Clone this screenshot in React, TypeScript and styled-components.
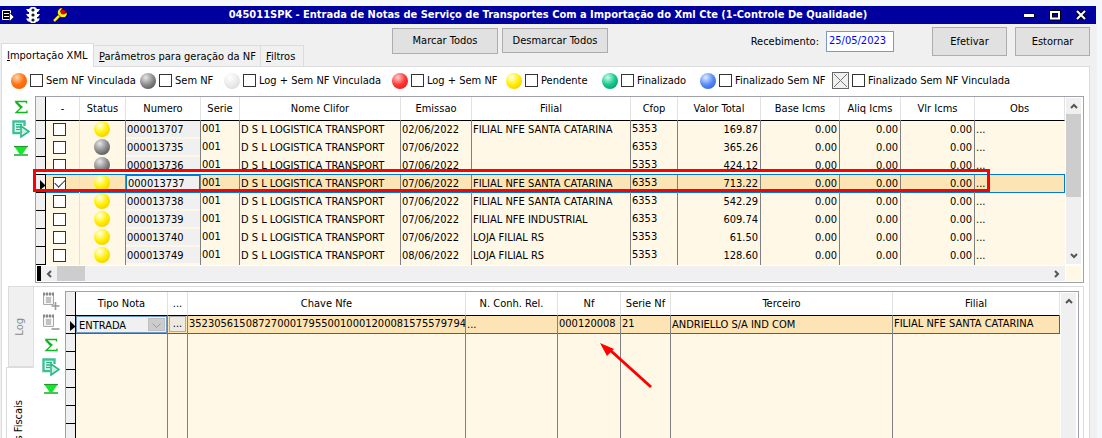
import React from "react";
import styled, { createGlobalStyle, css } from "styled-components";

const GlobalStyle = createGlobalStyle`
  * { box-sizing: border-box; }
  body {
    margin: 0;
    overflow: hidden;
    background: #f4f8fd;
    color: #000;
    font: 11px/14px "DejaVu Sans Condensed", "Noto Sans", sans-serif;
  }
  button, input, select { font: inherit; color: inherit; margin: 0; }
  svg { display: block; }
`;

/* ---------- window frame ---------- */

const Screen = styled.div`
  height: 100vh;
  display: flex;
  flex-direction: column;
  padding: 6px 5px 0 0;
  overflow: hidden;
`;

const TitleBar = styled.header`
  flex: none;
  display: flex;
  align-items: center;
  height: 18px;
  margin-right: 1px;
  background: #00009f;
  color: #fff;
`;

const TitleSide = styled.div<{ $end?: boolean }>`
  flex: none;
  width: 76px;
  display: flex;
  align-items: center;
  justify-content: ${(p) => (p.$end ? "flex-end" : "flex-start")};
  gap: ${(p) => (p.$end ? 12 : 10)}px;
  padding: 0 ${(p) => (p.$end ? 8 : 0)}px 0 ${(p) => (p.$end ? 0 : 1)}px;
`;

const TitleText = styled.h1`
  flex: 1;
  margin: 0;
  text-align: center;
  font-size: 11px;
  line-height: 18px;
  font-weight: bold;
  white-space: nowrap;
`;

const CaptionButton = styled.button`
  width: 14px;
  height: 14px;
  padding: 0;
  border: 0;
  background: none;
`;

const Body = styled.div`
  flex: 1;
  min-height: 0;
  display: flex;
  flex-direction: column;
  padding: 0 7px 0 1px;
  background: #f0f0f0;
`;

const TopBar = styled.div`
  flex: none;
  display: flex;
  height: 42px;
`;

const Tabs = styled.div`
  display: flex;
  align-items: flex-end;
  flex: 0 0 391px;
`;

const Tab = styled.button<{ $active?: boolean; $width: number }>`
  width: ${(p) => p.$width}px;
  height: 21px;
  padding: 2px 5px 0;
  text-align: left;
  white-space: nowrap;
  background: #f0f0f0;
  border: 1px solid #dcdcdc;
  border-width: 1px 1px 0 0;
  ${(p) =>
    p.$active &&
    css`
      height: 24px;
      margin-bottom: -1px;
      padding-top: 0;
      border-left-width: 1px;
      background: #fff;
      position: relative;
    `}
`;

const Actions = styled.div<{ $end?: boolean }>`
  display: flex;
  align-items: flex-start;
  gap: ${(p) => (p.$end ? 8 : 4)}px;
  padding-top: ${(p) => (p.$end ? 3 : 4)}px;
  margin-left: ${(p) => (p.$end ? "auto" : "0")};
`;

const PushButton = styled.button<{ $w: number; $h: number }>`
  width: ${(p) => p.$w}px;
  height: ${(p) => p.$h}px;
  padding: 0;
  background: #e1e1e1;
  border: 1px solid #adadad;
`;

const DateField = styled.label`
  display: flex;
  align-items: center;
  gap: 7px;
  padding: 4px 30px 0 0;
`;

const DateInput = styled.input`
  width: 68px;
  height: 21px;
  padding: 0 2px 3px;
  border: 1px solid #7a9cc0;
  background: #fff;
  color: #00f;
`;

const Panel = styled.main`
  flex: 1;
  min-height: 0;
  border: 1px solid #dcdcdc;
  border-bottom: 0;
  background: #fff;
`;

/* ---------- legend ---------- */

const Legend = styled.div`
  display: grid;
  grid-template-columns: 129px 84px 168px 114px 96px 98px 132px 1fr;
  align-items: center;
  height: 29px;
  padding: 0 0 2px 9px;
`;

const LegendItem = styled.label`
  display: flex;
  align-items: center;
  gap: 3px;
  white-space: nowrap;
`;

const ballColors = {
  orange: ["#ffd9b0", "#ff7010", "#f25a00"],
  gray: ["#e6e6e6", "#8c8c8c", "#3c3c3c"],
  light: ["#ffffff", "#ececec", "#d4d4d4"],
  red: ["#ffd0d0", "#ff3838", "#e01010"],
  yellow: ["#fffff0", "#fff000", "#f2b800"],
  green: ["#c8ffe8", "#18c890", "#008c58"],
  blue: ["#dcecff", "#5a8cf8", "#2050d8"],
};
type BallColor = keyof typeof ballColors;

const Ball = styled.span<{ $color: BallColor }>`
  display: block;
  flex: none;
  width: 16px;
  height: 16px;
  border-radius: 50%;
  background: radial-gradient(
    circle at 36% 28%,
    ${(p) => ballColors[p.$color][0]} 0,
    ${(p) => ballColors[p.$color][1]} 48%,
    ${(p) => ballColors[p.$color][2]} 100%
  );
`;

const Check = styled.input.attrs({ type: "checkbox" })`
  appearance: none;
  display: block;
  flex: none;
  position: relative;
  width: 13px;
  height: 13px;
  border: 1px solid #333;
  background: #fff;
  &:checked::after {
    content: "";
    position: absolute;
    left: 1px;
    top: 1px;
    width: 9px;
    height: 5px;
    border: solid #333;
    border-width: 0 0 1px 1px;
    transform: rotate(-45deg);
  }
`;

/* ---------- grids ---------- */

const Work = styled.div`
  display: flex;
  align-items: flex-start;
`;

const Tools = styled.div<{ $inner?: boolean }>`
  flex: none;
  display: flex;
  flex-direction: column;
  align-items: center;
  width: ${(p) => (p.$inner ? 31 : 33)}px;
  padding: ${(p) => (p.$inner ? "5px 0 0 3px" : "2px 0 0 5px")};
  gap: 4px;
`;

const ToolButton = styled.button`
  width: 18px;
  height: 18px;
  padding: 0;
  border: 0;
  background: none;
`;

const GridBox = styled.section<{ $inner?: boolean }>`
  flex: 1;
  min-width: 0;
  position: relative;
  display: grid;
  grid-template-columns: 1fr 18px;
  margin-right: ${(p) => (p.$inner ? 4 : 5)}px;
  border: 1px solid #a0a0a8;
  background: #fff;
`;

const Table = styled.table`
  width: 100%;
  table-layout: fixed;
  border-collapse: separate;
  border-spacing: 0;
  background: #fff8e7;
`;

const Th = styled.th`
  height: 24px;
  padding: 0;
  font-weight: normal;
  line-height: 20px;
  text-align: center;
  white-space: nowrap;
  background: #fff;
  border-right: 1px solid #e2e2e2;
  border-bottom: 1px solid #000;
`;

const HeadCell = styled.th<{ $corner?: boolean }>`
  height: ${(p) => (p.$corner ? 24 : 18)}px;
  padding: 0;
  background: #f0f0f0;
  border-right: 1px solid #000;
  border-bottom: 1px solid #000;
`;

const Td = styled.td<{ $right?: boolean; $high?: boolean; $soft?: boolean }>`
  height: 18px;
  padding: 0 2px 0 1px;
  line-height: ${(p) => (p.$high ? 16 : 18)}px;
  vertical-align: top;
  text-align: ${(p) => (p.$right ? "right" : "left")};
  white-space: nowrap;
  overflow: hidden;
  border-right: 1px solid ${(p) => (p.$soft ? "#e8e0d0" : "#808080")};
  &:last-child { border-right: 0; }
`;

const Tr = styled.tr<{ $selected?: boolean }>`
  ${(p) =>
    p.$selected &&
    css`
      ${Td} {
        background: #fce4b4;
        box-shadow: 0 -1px 0 #0078d7, inset 0 -1px 0 #0078d7;
      }
      ${Td}:last-child { border-right: 1px solid #0078d7; }
    `}
`;

const DetailTr = styled.tr<{ $selected?: boolean }>`
  ${(p) =>
    p.$selected &&
    css`
      ${Td} {
        background: #fce4b4;
        box-shadow: inset 0 -1px 0 #0078d7;
      }
      ${Td}:last-child { border-right: 1px solid #0078d7; }
    `}
`;

const CheckSlot = styled.div`
  padding: 2px 0 0 6px;
`;

const BallSlot = styled.div`
  display: flex;
  justify-content: center;
`;

const NumberBox = styled.div<{ $focus?: boolean }>`
  margin: 0 -2px 0 -1px;
  padding-left: 1px;
  height: 16px;
  background: #f0f0f0;
  ${(p) =>
    p.$focus &&
    css`
      height: 17px;
      line-height: 16px;
      border: 1px solid #0078d7;
      border-bottom: 0;
    `}
`;

const VScroll = styled.div`
  margin: 1px 2px 1px 1px;
  display: flex;
  flex-direction: column;
  align-items: center;
  background: #f0f0f0;
`;

const HScroll = styled.div`
  display: flex;
  align-items: center;
  height: 15px;
  margin: 1px 0 1px 1px;
  background: #f0f0f0;
  border-left: 4px solid #000;
`;

const Corner = styled.div`
  margin: 1px 2px 1px 1px;
  background: #fff8e7;
`;

const ScrollButton = styled.button`
  flex: none;
  width: 16px;
  height: 16px;
  padding: 3px;
  border: 0;
  background: none;
`;

const Thumb = styled.div<{ $vertical?: boolean }>`
  background: #cdcdcd;
  ${(p) => (p.$vertical ? "width: 100%; height: 83px;" : "width: 28px; height: 100%;")}
`;

const Spacer = styled.div`
  flex: 1;
`;

const Highlight = styled.div`
  position: absolute;
  left: -3px;
  right: 93px;
  top: 72px;
  height: 23px;
  border: 3px solid #f00;
  box-shadow: inset 0 2px 0 #fff;
  pointer-events: none;
`;

/* ---------- lower section ---------- */

const Lower = styled.div`
  display: flex;
  margin: 3px 5px 0 4px;
`;

const SideTabs = styled.div`
  flex: none;
  width: 28px;
  display: flex;
  flex-direction: column;
  align-items: flex-end;
`;

const SideTab = styled.button<{ $active?: boolean }>`
  width: ${(p) => (p.$active ? 28 : 26)}px;
  height: ${(p) => (p.$active ? 130 : 81)}px;
  padding: 0 2px 0 0;
  writing-mode: vertical-rl;
  border: 1px solid #dcdcdc;
  border-right-color: ${(p) => (p.$active ? "#fff" : "#d4e2f0")};
  background: ${(p) => (p.$active ? "#fff" : "#f0f0f0")};
  color: ${(p) => (p.$active ? "#000" : "#8c8c8c")};
  text-align: center;
  span { transform: rotate(180deg); display: inline-block; }
`;

const LowerPanel = styled.div`
  flex: 1;
  min-width: 0;
  display: flex;
  align-items: flex-start;
  border-top: 1px solid #dcdcdc;
  border-right: 1px solid #dcdcdc;
`;

const DetailWrap = styled.div`
  flex: 1;
  min-width: 0;
  display: flex;
  padding-top: 4px;
`;

const TypeField = styled.label`
  display: flex;
  position: relative;
  height: 17px;
  margin: 0 -2px 0 -1px;
  border: 1px solid #6f9bc8;
  background: #f0f0f0;
`;

const TypeSelect = styled.select`
  appearance: none;
  width: 100%;
  height: 15px;
  padding: 2px 0 0 2px;
  border: 0;
  background: none;
  line-height: 14px;
`;

const SelectArrow = styled.span`
  position: absolute;
  right: 1px;
  top: 1px;
  width: 17px;
  height: 13px;
  padding: 4px 3px 0;
  background: #ccc;
  border: 1px solid #bfbfbf;
  pointer-events: none;
`;

const MoreButton = styled.button`
  display: block;
  width: 17px;
  height: 16px;
  padding: 0;
  line-height: 14px;
  border: 1px solid #adadad;
  background: #eeeae2;
`;

const Pointer = styled.svg`
  position: absolute;
  left: 534px;
  top: 50px;
  pointer-events: none;
`;

/* ---------- icons ---------- */

const SigmaIcon = () => (
  <svg width="18" height="18" viewBox="0 0 18 18">
    <path d="M14.500 5.500V3.500H4L10 9L4 14.500H15V12.500" fill="none" stroke="#10b820" strokeWidth="1.300" />
    <path d="M4 3.500L10 9L8.500 10.500L3 4.500Z" fill="#10b820" />
  </svg>
);

const RunIcon = () => (
  <svg width="18" height="18" viewBox="0 0 18 18">
    <path d="M12.500 6V1.500H1.500V13H8" fill="none" stroke="#3cc09a" strokeWidth="2.400" />
    <path d="M4 4.500H10M4 7H9M4 9.500H8" stroke="#2cb080" strokeWidth="1.300" />
    <path d="M9 6L17 11.500L9 17Z" fill="#c8f0e0" stroke="#2cb888" strokeWidth="1.600" />
  </svg>
);

const DownIcon = () => (
  <svg width="18" height="18" viewBox="0 0 18 18">
    <path d="M2 4H16L10.500 12H7.500Z" fill="#14e82c" />
    <path d="M2 4.500H16" stroke="#2a9430" strokeWidth="1.200" />
    <path d="M2 13H16" stroke="#1cb42c" strokeWidth="1.600" />
  </svg>
);

const SheetIcon = ({ plus }: { plus?: boolean }) => (
  <svg width="18" height="18" viewBox="0 0 18 18">
    <path d="M1.500 2H11.500V12.500H1.500Z" fill="#f4f4f4" stroke="#a8a8a8" />
    <path d="M1 2H12" stroke="#888" strokeWidth="3" strokeDasharray="2 1" />
    <path d="M4 6H9M4 8H9M4 10H9" stroke="#909090" />
    <path d={plus ? "M13.500 10V18M9.500 14H17.500" : "M9.500 15H17.500"} stroke="#999" strokeWidth="1.600" />
  </svg>
);

const ListIcon = () => (
  <svg width="14" height="14" viewBox="0 0 14 14">
    <path d="M1.500 2.500H9.500V11.500H1.500Z" fill="#000" stroke="#fff" />
    <path d="M3 5.500H8M3 8.500H8" stroke="#fff" />
    <path d="M8.500 4.500L13 9L8.500 13.500Z" fill="#fff" stroke="#000" strokeWidth=".6" />
  </svg>
);

const SignalIcon = () => (
  <svg width="16" height="18" viewBox="0 0 16 18">
    <path d="M6 1H10L12 3V15L10 17H6L4 15V3Z" fill="#fff" />
    <path d="M1 3H5V6H3ZM15 3H11V6H13ZM1 8H5V11H3ZM15 8H11V11H13ZM1 12.500H5V15.500H3ZM15 12.500H11V15.500H13Z" fill="#fff" />
    <g fill="#102020">
      <circle cx="8" cy="4" r="1.600" />
      <circle cx="8" cy="9" r="1.600" />
      <circle cx="8" cy="14" r="1.600" />
    </g>
  </svg>
);

const WrenchIcon = () => (
  <svg width="18" height="16" viewBox="0 0 18 16">
    <path d="M3 14L9 8" stroke="#000" strokeWidth="4.500" />
    <path d="M3 14L10 7" stroke="#ffe820" strokeWidth="2.500" />
    <path d="M9 1H12L9.500 4L10.500 6.500L13 7L16 5V8L14 10.500H10L6.500 7V4Z" fill="#ffe820" stroke="#000" strokeWidth=".6" />
    <circle cx="12" cy="5" r="2.200" fill="#f00000" />
  </svg>
);

const CrossBox = () => (
  <svg width="17" height="17" viewBox="0 0 17 17">
    <rect x=".5" y=".5" width="16" height="16" fill="#f0f0f0" stroke="#666" />
    <path d="M2 2L15 15M15 2L2 15" stroke="#777" />
  </svg>
);

const chevrons = {
  up: "M2 7L5 4L8 7",
  down: "M2 3L5 6L8 3",
  left: "M7 2L4 5L7 8",
  right: "M3 2L6 5L3 8",
};

const Chevron = ({ dir }: { dir: keyof typeof chevrons }) => (
  <svg width="10" height="10" viewBox="0 0 10 10">
    <path d={chevrons[dir]} fill="none" stroke="#555" strokeWidth="2" />
  </svg>
);

const RowMarker = () => (
  <svg width="9" height="17" viewBox="0 0 9 17">
    <path d="M4 5L9 10V11L4 15Z" fill="#000" />
  </svg>
);

/* ---------- data ---------- */

const legend: { color?: BallColor; label: string }[] = [
  { color: "orange", label: "Sem NF Vinculada" },
  { color: "gray", label: "Sem NF" },
  { color: "light", label: "Log + Sem NF Vinculada" },
  { color: "red", label: "Log + Sem NF" },
  { color: "yellow", label: "Pendente" },
  { color: "green", label: "Finalizado" },
  { color: "blue", label: "Finalizado Sem NF" },
  { label: "Finalizado Sem NF Vinculada" },
];

const columns: [string, number?][] = [
  ["-", 34],
  ["Status", 46],
  ["Numero", 75],
  ["Serie", 39],
  ["Nome Clifor", 161],
  ["Emissao", 71],
  ["Filial", 159],
  ["Cfop", 47],
  ["Valor Total", 83],
  ["Base Icms", 79],
  ["Aliq Icms", 61],
  ["Vlr Icms", 74],
  ["Obs"],
];

const rows: { n: string; date: string; filial: string; cfop: string; total: string; gray?: boolean; selected?: boolean }[] = [
  { n: "000013707", date: "02/06/2022", filial: "FILIAL NFE SANTA CATARINA", cfop: "5353", total: "169.87" },
  { n: "000013735", date: "07/06/2022", filial: "", cfop: "6353", total: "365.26", gray: true },
  { n: "000013736", date: "07/06/2022", filial: "", cfop: "5353", total: "424.12", gray: true },
  { n: "000013737", date: "07/06/2022", filial: "FILIAL NFE SANTA CATARINA", cfop: "6353", total: "713.22", selected: true },
  { n: "000013738", date: "07/06/2022", filial: "FILIAL NFE SANTA CATARINA", cfop: "6353", total: "542.29" },
  { n: "000013739", date: "07/06/2022", filial: "FILIAL NFE INDUSTRIAL", cfop: "6353", total: "609.74" },
  { n: "000013740", date: "07/06/2022", filial: "LOJA FILIAL RS", cfop: "5353", total: "61.50" },
  { n: "000013749", date: "08/06/2022", filial: "LOJA FILIAL RS", cfop: "5353", total: "128.60" },
];

const detailColumns: [string, number?][] = [
  ["Tipo Nota", 92],
  ["...", 20],
  ["Chave Nfe", 278],
  ["N. Conh. Rel.", 92],
  ["Nf", 63],
  ["Serie Nf", 50],
  ["Terceiro", 222],
  ["Filial"],
];

const ColumnSet = ({ cols }: { cols: [string, number?][] }) => (
  <>
    <colgroup>
      <col width={10} />
      {cols.map(([name, w]) => (
        <col key={name} width={w} />
      ))}
    </colgroup>
    <thead>
      <tr>
        <HeadCell $corner />
        {cols.map(([name]) => (
          <Th key={name} scope="col">
            {name}
          </Th>
        ))}
      </tr>
    </thead>
  </>
);

const CommonTools = () => (
  <>
    <ToolButton aria-label="Somar"><SigmaIcon /></ToolButton>
    <ToolButton aria-label="Executar"><RunIcon /></ToolButton>
    <ToolButton aria-label="Descer"><DownIcon /></ToolButton>
  </>
);

export default function App() {
  return (
    <Screen>
      <GlobalStyle />
      <TitleBar>
        <TitleSide>
          <ListIcon />
          <SignalIcon />
          <WrenchIcon />
        </TitleSide>
        <TitleText>
          045011SPK - Entrada de Notas de Serviço de Transportes Com a Importação do Xml Cte (1-Controle De Qualidade)
        </TitleText>
        <TitleSide $end>
          <CaptionButton aria-label="Minimizar">
            <svg width="14" height="14" viewBox="0 0 14 14">
              <path d="M1.500 5.500H12.500V9.500H1.500Z" fill="#fff" stroke="#000" />
            </svg>
          </CaptionButton>
          <CaptionButton aria-label="Maximizar">
            <svg width="14" height="14" viewBox="0 0 14 14">
              <path d="M3 4H11V10.500H3Z" fill="none" stroke="#000" strokeWidth="4" />
              <path d="M3 4H11V10.500H3Z" fill="none" stroke="#fff" strokeWidth="2" />
            </svg>
          </CaptionButton>
          <CaptionButton aria-label="Fechar">
            <svg width="14" height="14" viewBox="0 0 14 14">
              <path d="M3 3L11 11M11 3L3 11" stroke="#000" strokeWidth="4" />
              <path d="M3 3L11 11M11 3L3 11" stroke="#fff" strokeWidth="2" />
            </svg>
          </CaptionButton>
        </TitleSide>
      </TitleBar>

      <Body>
        <TopBar>
          <Tabs role="tablist">
            <Tab role="tab" $active $width={93}><u>I</u>mportação XML</Tab>
            <Tab role="tab" $width={167}><u>P</u>arâmetros para geração da NF</Tab>
            <Tab role="tab" $width={43}><u>F</u>iltros</Tab>
          </Tabs>
          <Actions>
            <PushButton $w={106} $h={26}>Marcar Todos</PushButton>
            <PushButton $w={106} $h={25}>Desmarcar Todos</PushButton>
          </Actions>
          <Actions $end>
            <DateField>
              Recebimento:
              <DateInput defaultValue="25/05/2023" />
            </DateField>
            <PushButton $w={75} $h={29}>Efetivar</PushButton>
            <PushButton $w={75} $h={29}>Estornar</PushButton>
          </Actions>
        </TopBar>

        <Panel>
          <Legend>
            {legend.map((l) => (
              <LegendItem key={l.label}>
                {l.color ? <Ball $color={l.color} /> : <CrossBox />}
                <Check />
                {l.label}
              </LegendItem>
            ))}
          </Legend>

          <Work>
            <Tools>
              <CommonTools />
            </Tools>
            <GridBox>
              <Table>
                <ColumnSet cols={columns} />
                <tbody>
                  {rows.map((r) => (
                    <Tr key={r.n} $selected={r.selected}>
                      <HeadCell scope="row">{r.selected && <RowMarker />}</HeadCell>
                      <Td $soft>
                        <CheckSlot>
                          <Check aria-label={r.n} defaultChecked={r.selected} />
                        </CheckSlot>
                      </Td>
                      <Td>
                        <BallSlot>
                          <Ball $color={r.gray ? "gray" : "yellow"} />
                        </BallSlot>
                      </Td>
                      <Td>
                        <NumberBox $focus={r.selected}>{r.n}</NumberBox>
                      </Td>
                      <Td $high>001</Td>
                      <Td>D S L LOGISTICA TRANSPORT</Td>
                      <Td>{r.date}</Td>
                      <Td>{r.filial}</Td>
                      <Td $high>{r.cfop}</Td>
                      <Td $right>{r.total}</Td>
                      <Td $right>0.00</Td>
                      <Td $right>0.00</Td>
                      <Td $right>0.00</Td>
                      <Td>...</Td>
                    </Tr>
                  ))}
                </tbody>
              </Table>
              <VScroll>
                <ScrollButton aria-label="Rolar para cima"><Chevron dir="up" /></ScrollButton>
                <Thumb $vertical />
                <Spacer />
                <ScrollButton aria-label="Rolar para baixo"><Chevron dir="down" /></ScrollButton>
              </VScroll>
              <HScroll>
                <ScrollButton aria-label="Rolar para a esquerda"><Chevron dir="left" /></ScrollButton>
                <Thumb />
                <Spacer />
                <ScrollButton aria-label="Rolar para a direita"><Chevron dir="right" /></ScrollButton>
              </HScroll>
              <Corner />
              <Highlight />
            </GridBox>
          </Work>

          <Lower>
            <SideTabs role="tablist">
              <SideTab role="tab"><span>Log</span></SideTab>
              <SideTab role="tab" $active><span>Notas Fiscais</span></SideTab>
            </SideTabs>
            <LowerPanel>
              <Tools $inner>
                <ToolButton aria-label="Incluir"><SheetIcon plus /></ToolButton>
                <ToolButton aria-label="Excluir"><SheetIcon /></ToolButton>
                <CommonTools />
              </Tools>
              <DetailWrap>
                <GridBox $inner>
                  <Table>
                    <ColumnSet cols={detailColumns} />
                    <tbody>
                      <DetailTr $selected>
                        <HeadCell scope="row"><RowMarker /></HeadCell>
                        <Td>
                          <TypeField>
                            <TypeSelect aria-label="Tipo Nota" defaultValue="ENTRADA">
                              <option>ENTRADA</option>
                            </TypeSelect>
                            <SelectArrow>
                              <svg width="9" height="6" viewBox="0 0 9 6">
                                <path d="M.5 .5L4.500 4.500L8.500 .5" fill="none" stroke="#999" />
                              </svg>
                            </SelectArrow>
                          </TypeField>
                        </Td>
                        <Td><MoreButton aria-label="Abrir">...</MoreButton></Td>
                        <Td $high>35230561508727000179550010001200081575579794</Td>
                        <Td>...</Td>
                        <Td $high>000120008</Td>
                        <Td $high>21</Td>
                        <Td>ANDRIELLO S/A IND COM</Td>
                        <Td $high>FILIAL NFE SANTA CATARINA</Td>
                      </DetailTr>
                      {[1, 2, 3, 4, 5, 6].map((i) => (
                        <DetailTr key={i}>
                          <HeadCell />
                          {detailColumns.map(([name]) => (
                            <Td key={name} />
                          ))}
                        </DetailTr>
                      ))}
                    </tbody>
                  </Table>
                  <VScroll>
                    <ScrollButton aria-label="Rolar para cima"><Chevron dir="up" /></ScrollButton>
                  </VScroll>
                  <Pointer width="56" height="48" viewBox="0 0 56 48">
                    <path d="M10 8L51 45" stroke="#f00" strokeWidth="3" />
                    <path d="M0 1L14 7L7 14Z" fill="#f00" />
                  </Pointer>
                </GridBox>
              </DetailWrap>
            </LowerPanel>
          </Lower>
        </Panel>
      </Body>
    </Screen>
  );
}
